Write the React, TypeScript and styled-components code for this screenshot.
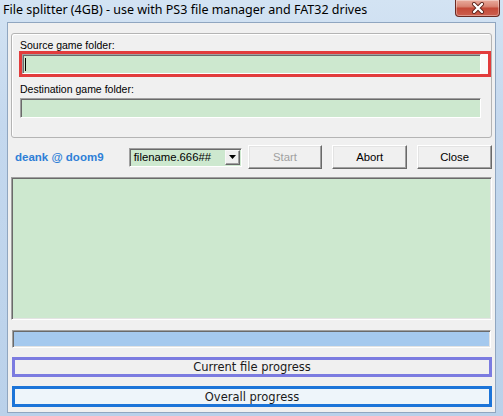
import React from "react";
import styled, { createGlobalStyle } from "styled-components";

const Global = createGlobalStyle`
  html, body { margin: 0; padding: 0; background: #bcd3ea; }
  * { box-sizing: border-box; }
`;

const Window = styled.div`
  width: 503px;
  height: 416px;
  display: flex;
  flex-direction: column;
  background: linear-gradient(180deg, #d3e3f3 0%, #c4d8ee 30%, #bad1ea 100%);
  overflow: hidden;
`;

const TitleBar = styled.div`
  height: 23px;
  display: flex;
  align-items: flex-start;
`;

const Title = styled.div`
  padding: 1px 0 0 3px;
  font-family: "Noto Sans", "Open Sans", sans-serif;
  font-size: 12.5px;
  line-height: 18px;
  color: #000;
  white-space: nowrap;
`;

const CloseBtn = styled.div`
  margin-left: auto;
  margin-right: 3px;
  width: 45px;
  height: 17px;
  border: 1px solid #6b2a22;
  border-top: none;
  border-radius: 0 0 4px 4px;
  background: linear-gradient(180deg, #e9ab9c 0%, #d98473 40%, #c44a38 52%, #cc5f4f 100%);
  box-shadow: inset 0 0 0 1px rgba(255, 255, 255, 0.35);
  display: flex;
  align-items: center;
  justify-content: center;
`;

const Client = styled.div`
  margin: 0 8px 4px 8px;
  height: 389px;
  background: #f0f0f0;
  box-shadow: 0 0 0 1px #90a6c0;
  padding: 10px 3px 0 3px;
  display: flex;
  flex-direction: column;
  font-family: "Liberation Sans", Arial, sans-serif;
  font-size: 10.5px;
  color: #000;
`;

const GroupBox = styled.div`
  width: 481px;
  height: 105px;
  border: 1px solid #b4b4b4;
  border-radius: 3px;
  box-shadow: inset 1px 1px 0 #fff;
  padding: 5px 0 0 8px;
  display: flex;
  flex-direction: column;
`;

const Label = styled.div<{ $top?: number }>`
  height: 12px;
  line-height: 12px;
  margin-top: ${(p) => p.$top ?? 0}px;
  color: #000;
`;

const FocusRing = styled.div`
  margin-left: -1px;
  width: 472px;
  height: 26px;
  border: 3px solid #e23c3c;
  background: #fafafa;
`;

const Edit = styled.div<{ $w: number; $top?: number }>`
  width: ${(p) => p.$w}px;
  height: 20px;
  margin-top: ${(p) => p.$top ?? 0}px;
  background: #cde8cf;
  border-style: solid;
  border-width: 1px;
  border-color: #a0a0a0 #ffffff #ffffff #a0a0a0;
  box-shadow: inset 1px 1px 0 #6a6a6a;
  display: flex;
  align-items: center;
`;

const Caret = styled.span`
  display: block;
  width: 1px;
  height: 13px;
  margin-left: 2px;
  background: #000;
`;

const Row = styled.div`
  margin-top: 7px;
  height: 24px;
  display: flex;
  align-items: center;
`;

const Author = styled.div`
  width: 118px;
  padding-left: 4px;
  font-weight: bold;
  font-size: 11.5px;
  color: #2e7fd7;
  white-space: nowrap;
`;

const Combo = styled.div`
  width: 113px;
  height: 19px;
  background: #cde8cf;
  border-style: solid;
  border-width: 1px;
  border-color: #a0a0a0 #ffffff #ffffff #a0a0a0;
  box-shadow: inset 1px 1px 0 #6a6a6a;
  display: flex;
  align-items: center;
  padding: 1px 1px 1px 4px;
  font-size: 11.3px;
`;

const ComboText = styled.span`
  flex: 1;
  white-space: nowrap;
`;

const DropBtn = styled.div`
  width: 15px;
  height: 15px;
  background: #f0f0f0;
  border-style: solid;
  border-width: 1px;
  border-color: #f8f8f8 #696969 #696969 #f8f8f8;
  box-shadow: inset -1px -1px 0 #a0a0a0;
  display: flex;
  align-items: center;
  justify-content: center;
`;

const Button = styled.div<{ $gap: number; $disabled?: boolean }>`
  width: 75px;
  height: 24px;
  margin-left: ${(p) => p.$gap}px;
  background: #f0f0f0;
  border-style: solid;
  border-width: 1px;
  border-color: #ffffff #696969 #696969 #ffffff;
  box-shadow: inset -1px -1px 0 #a0a0a0, inset 1px 1px 0 #e3e3e3;
  display: flex;
  align-items: center;
  justify-content: center;
  font-size: 11.3px;
  color: ${(p) => (p.$disabled ? "#a0a0a0" : "#000")};
`;

const Log = styled.div`
  margin-top: 8px;
  width: 481px;
  height: 143px;
  background: #cde8cf;
  border-style: solid;
  border-width: 1px;
  border-color: #a0a0a0 #ffffff #ffffff #a0a0a0;
  box-shadow: inset 1px 1px 0 #6a6a6a, inset -1px -1px 0 #e3e3e3;
`;

const BlueBar = styled.div`
  margin-top: 10px;
  margin-left: 1px;
  width: 479px;
  height: 18px;
  background: #a5c9ee;
  border-style: solid;
  border-width: 1px;
  border-color: #a0a0a0 #ffffff #ffffff #a0a0a0;
  box-shadow: inset 1px 1px 0 #6a6a6a, inset -1px -1px 0 #e3e3e3;
`;

const Progress = styled.div<{ $color: string; $bg: string; $h: number }>`
  margin-top: 9px;
  margin-left: 1px;
  width: 480px;
  height: ${(p) => p.$h}px;
  border: 3px solid ${(p) => p.$color};
  background: ${(p) => p.$bg};
  display: flex;
  align-items: center;
  justify-content: center;
  font-family: "DejaVu Sans", Verdana, sans-serif;
  font-size: 11.5px;
  color: #1a1a1a;
`;

export default function App() {
  return (
    <>
      <Global />
      <Window>
        <TitleBar>
          <Title>File splitter (4GB) - use with PS3 file manager and FAT32 drives</Title>
          <CloseBtn>
            <svg width="14" height="12" viewBox="0 0 14 12">
              <path d="M3 2 L11 10 M11 2 L3 10" stroke="#5a2018" strokeWidth="4" strokeLinecap="round" />
              <path d="M3 2 L11 10 M11 2 L3 10" stroke="#ffffff" strokeWidth="2.4" strokeLinecap="round" />
            </svg>
          </CloseBtn>
        </TitleBar>
        <Client>
          <GroupBox>
            <Label>Source game folder:</Label>
            <FocusRing>
              <Edit $w={459}>
                <Caret />
              </Edit>
            </FocusRing>
            <Label $top={6}>Destination game folder:</Label>
            <Edit $w={461} $top={3} />
          </GroupBox>
          <Row>
            <Author>deank @ doom9</Author>
            <Combo>
              <ComboText>filename.666##</ComboText>
              <DropBtn>
                <svg width="7" height="4" viewBox="0 0 7 4">
                  <path d="M0 0 H7 L3.5 4 Z" fill="#000" />
                </svg>
              </DropBtn>
            </Combo>
            <Button $gap={6} $disabled>Start</Button>
            <Button $gap={10}>Abort</Button>
            <Button $gap={10}>Close</Button>
          </Row>
          <Log />
          <BlueBar />
          <Progress $color="#7b7be0" $bg="#f0f0f0" $h={20}>Current file progress</Progress>
          <Progress $color="#1c74d8" $bg="#eef5fa" $h={21}>Overall progress</Progress>
        </Client>
      </Window>
    </>
  );
}
